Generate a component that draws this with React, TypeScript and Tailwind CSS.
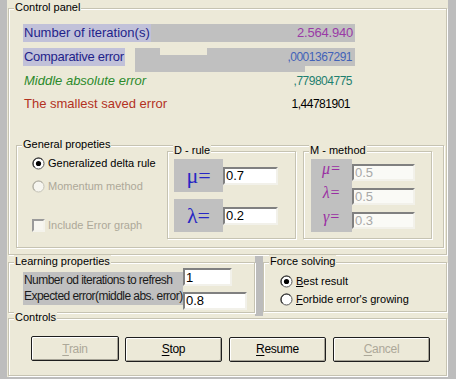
import React from "react";

const GRAY = "bg-[#c0c0c0]";

function GroupBox({ title, className, children }: { title: string; className?: string; children?: React.ReactNode }) {
  return (
    <div className={`relative border border-[#c6c3b2] shadow-[inset_1px_1px_0_#fff,1px_1px_0_#fff] ${className ?? ""}`}>
      <span className="absolute -top-[8px] left-[5px] px-[1px] bg-[#ece9d8] text-[11px] leading-[13px] text-black whitespace-nowrap">
        {title}
      </span>
      {children}
    </div>
  );
}

function Radio({ checked, disabled }: { checked?: boolean; disabled?: boolean }) {
  return (
    <svg width="13" height="13" viewBox="0 0 13 13" className="shrink-0">
      <circle cx="6.5" cy="6.5" r="5.5" fill={disabled ? "#f6f5ef" : "#fff"} stroke={disabled ? "#c4c2b6" : "#555"} strokeWidth="1" />
      <path d="M2.6 10.4 A5.5 5.5 0 0 1 10.4 2.6" fill="none" stroke={disabled ? "#b3b1a5" : "#3a3a3a"} strokeWidth="1.2" />
      {checked && <circle cx="6.5" cy="6.5" r="2.6" fill="#000" />}
    </svg>
  );
}

function Field({ value, w, h = 18, disabled }: { value: string; w: string; h?: number; disabled?: boolean }) {
  return (
    <input
      readOnly
      value={value}
      className={`${w} ${h === 17 ? "h-[17px]" : "h-[18px]"} border-2 border-t-[#808080] border-l-[#808080] border-r-[#f2f1ea] border-b-[#f2f1ea] px-[1px] text-[13px] leading-[13px] outline-none font-['Liberation_Sans',Arial,sans-serif] ${
        disabled ? "bg-[#fafaf6] text-[#a8a8a8]" : "bg-white text-black"
      }`}
    />
  );
}

function Button({ label, w, disabled }: { label: string; w: string; disabled?: boolean }) {
  return (
    <button
      className={`${w} h-[25px] rounded-[2px] border border-[#1e1e1e] bg-[#ece9d8] shadow-[inset_1px_1px_0_#fff,inset_-1px_-1px_0_#a6a396] text-[12px] font-normal tracking-[-0.3px] ${
        disabled ? "text-[#aca899]" : "text-black"
      }`}
    >
      <span className="underline underline-offset-2">{label[0]}</span>
      {label.slice(1)}
    </button>
  );
}

export default function App() {
  return (
    <div className="flex w-[456px] h-[379px] bg-[#bdbdbd] font-['Liberation_Sans',Arial,sans-serif] overflow-hidden">
      <div className="w-[7px] shrink-0" />
      <div className="w-[441px] h-[377px] bg-[#ece9d8] shrink-0">
        {/* Control panel */}
        <GroupBox title="Control panel" className="ml-[1px] mt-[8px] w-[439px] h-[247px]">
          <div className="pl-[14px] pt-[15px]">
            <div className={`flex h-[18px] w-[332px] items-center ${GRAY}`}>
              <span className="h-full flex items-center bg-[#c1c1d9] px-[1px] text-[13px] text-[#1f1f8a]">Number of iteration(s)</span>
              <span className="ml-auto pr-[2px] text-[13px] tracking-[-0.2px] text-[#9a3aa6]">2.564.940</span>
            </div>
            <div className="mt-[6px] flex h-[24px] w-[332px] items-start justify-between">
              <span className="h-[18px] flex items-center bg-[#c1c1d9] px-[1px] text-[13px] tracking-[-0.3px] text-[#1f1f8a]">Comparative error</span>
              <div className="flex flex-col w-[220px]">
                <div className="flex h-[18px]">
                  <div className={`w-[25px] ${GRAY}`} />
                  <div className="w-[47px] flex flex-col">
                    <div className="h-[7px]" />
                    <div className={`flex-1 ${GRAY}`} />
                  </div>
                  <div className={`flex-1 flex items-center justify-end pr-[3px] text-[12px] tracking-[-0.5px] text-[#4262b8] ${GRAY}`}>,0001367291</div>
                </div>
                <div className={`h-[6px] w-[170px] ${GRAY}`} />
              </div>
            </div>
            <div className="flex h-[18px] w-[332px] items-center justify-between">
              <span className="pl-[1px] text-[13px] italic text-[#2b8a2b]">Middle absolute error</span>
              <span className="pr-[3px] text-[12px] tracking-[-0.5px] text-[#1f7f6f]">,779804775</span>
            </div>
            <div className="mt-[5px] flex h-[18px] w-[332px] items-center justify-between">
              <span className="pl-[1px] text-[13px] text-[#b3321f]">The smallest saved error</span>
              <span className="pr-[5px] text-[12px] tracking-[-0.5px] text-black">1,44781901</span>
            </div>
          </div>

          {/* General propeties */}
          <GroupBox title="General propeties" className="ml-[7px] mt-[32px] w-[428px] h-[103px] flex">
            <div className="w-[150px] pl-[15px] pt-[10px] text-[11px]">
              <div className="flex h-[14px] items-center gap-[3px] text-black">
                <Radio checked />
                <span>Generalized delta rule</span>
              </div>
              <div className="mt-[9px] flex h-[14px] items-center gap-[3px] text-[#aca899]">
                <Radio disabled />
                <span>Momentum method</span>
              </div>
              <div className="mt-[25px] flex h-[14px] items-center gap-[3px] text-[#aca899]">
                <div className="w-[13px] h-[13px] border-2 border-t-[#9a9a9a] border-l-[#9a9a9a] border-r-[#f4f3ec] border-b-[#f4f3ec] bg-[#f7f6f0]" />
                <span>Include Error graph</span>
              </div>
            </div>

            <GroupBox title="D - rule" className="mt-[5px] w-[129px] h-[88px]">
              <div className="pl-[6px] pt-[7px]">
                <div className="flex items-center">
                  <div className={`w-[49px] h-[33px] flex items-center justify-center text-[22px] leading-none text-[#2626c4] font-['Liberation_Serif',serif] ${GRAY}`}>μ=</div>
                  <Field value="0.7" w="w-[55px]" />
                </div>
                <div className="mt-[7px] flex items-center">
                  <div className={`w-[49px] h-[33px] flex items-center justify-center text-[22px] leading-none text-[#2626c4] font-['Liberation_Serif',serif] ${GRAY}`}>λ=</div>
                  <Field value="0.2" w="w-[55px]" />
                </div>
              </div>
            </GroupBox>

            <GroupBox title="M - method" className="ml-[7px] mt-[5px] w-[129px] h-[88px]">
              <div className="pl-[7px] pt-[7px]">
                {[
                  ["μ=", "0.5", "h-[24px]"],
                  ["λ=", "0.5", "h-[24px]"],
                  ["γ=", "0.3", "h-[25px]"],
                ].map(([sym, val, h]) => (
                  <div key={sym} className={`flex items-start ${h}`}>
                    <div className={`w-[41px] h-full ${GRAY}`}>
                      <div className="mt-[1px] h-[17px] flex items-center justify-center text-[16px] italic leading-none text-[#9a2fa3] font-['Liberation_Serif',serif]">{sym}</div>
                    </div>
                    <div className="mt-[1px]">
                      <Field value={val} w="w-[63px]" h={17} disabled />
                    </div>
                  </div>
                ))}
              </div>
            </GroupBox>
          </GroupBox>
        </GroupBox>

        {/* Learning / Force */}
        <div className="flex items-start">
          <GroupBox title="Learning properties" className="ml-[1px] mt-[7px] w-[247px] h-[51px]">
            <div className="pl-[14px] pt-[5px] flex items-start">
              <div className={`mt-[4px] w-[160px] h-[33px] flex flex-col text-[12px] tracking-[-0.55px] leading-[16px] text-[#1a1a1a] ${GRAY}`}>
                <span className="pl-[1px]">Number od iterations to refresh</span>
                <span className="pl-[1px]">Expected error(middle abs. error)</span>
              </div>
              <div className="flex flex-col">
                <Field value="1" w="w-[49px]" />
                <div className="mt-[2px]">
                  <Field value="0.8" w="w-[64px]" />
                </div>
              </div>
            </div>
          </GroupBox>
          <div className="w-[8px] h-[61px] bg-[#bcbcbc]" />
          <GroupBox title="Force solving" className="mt-[7px] w-[184px] h-[50px]">
            <div className="pl-[16px] pt-[12px] text-[11px] text-black">
              <div className="flex h-[13px] items-center gap-[3px]">
                <Radio checked />
                <span>
                  <span className="underline">B</span>est result
                </span>
              </div>
              <div className="mt-[5px] flex h-[13px] items-center gap-[3px]">
                <Radio />
                <span>
                  <span className="underline">F</span>orbide error's growing
                </span>
              </div>
            </div>
          </GroupBox>
        </div>

        {/* Controls */}
        <GroupBox title="Controls" className="ml-[1px] mt-[2px] w-[439px] h-[58px]">
          <div className="pl-[22px] pt-[17px] flex">
            <Button label="Train" w="w-[88px]" disabled />
            <div className="ml-[6px]">
              <Button label="Stop" w="w-[97px]" />
            </div>
            <div className="ml-[7px]">
              <Button label="Resume" w="w-[97px]" />
            </div>
            <div className="ml-[7px]">
              <Button label="Cancel" w="w-[97px]" disabled />
            </div>
          </div>
        </GroupBox>
      </div>
      <div className="flex-1" />
    </div>
  );
}
